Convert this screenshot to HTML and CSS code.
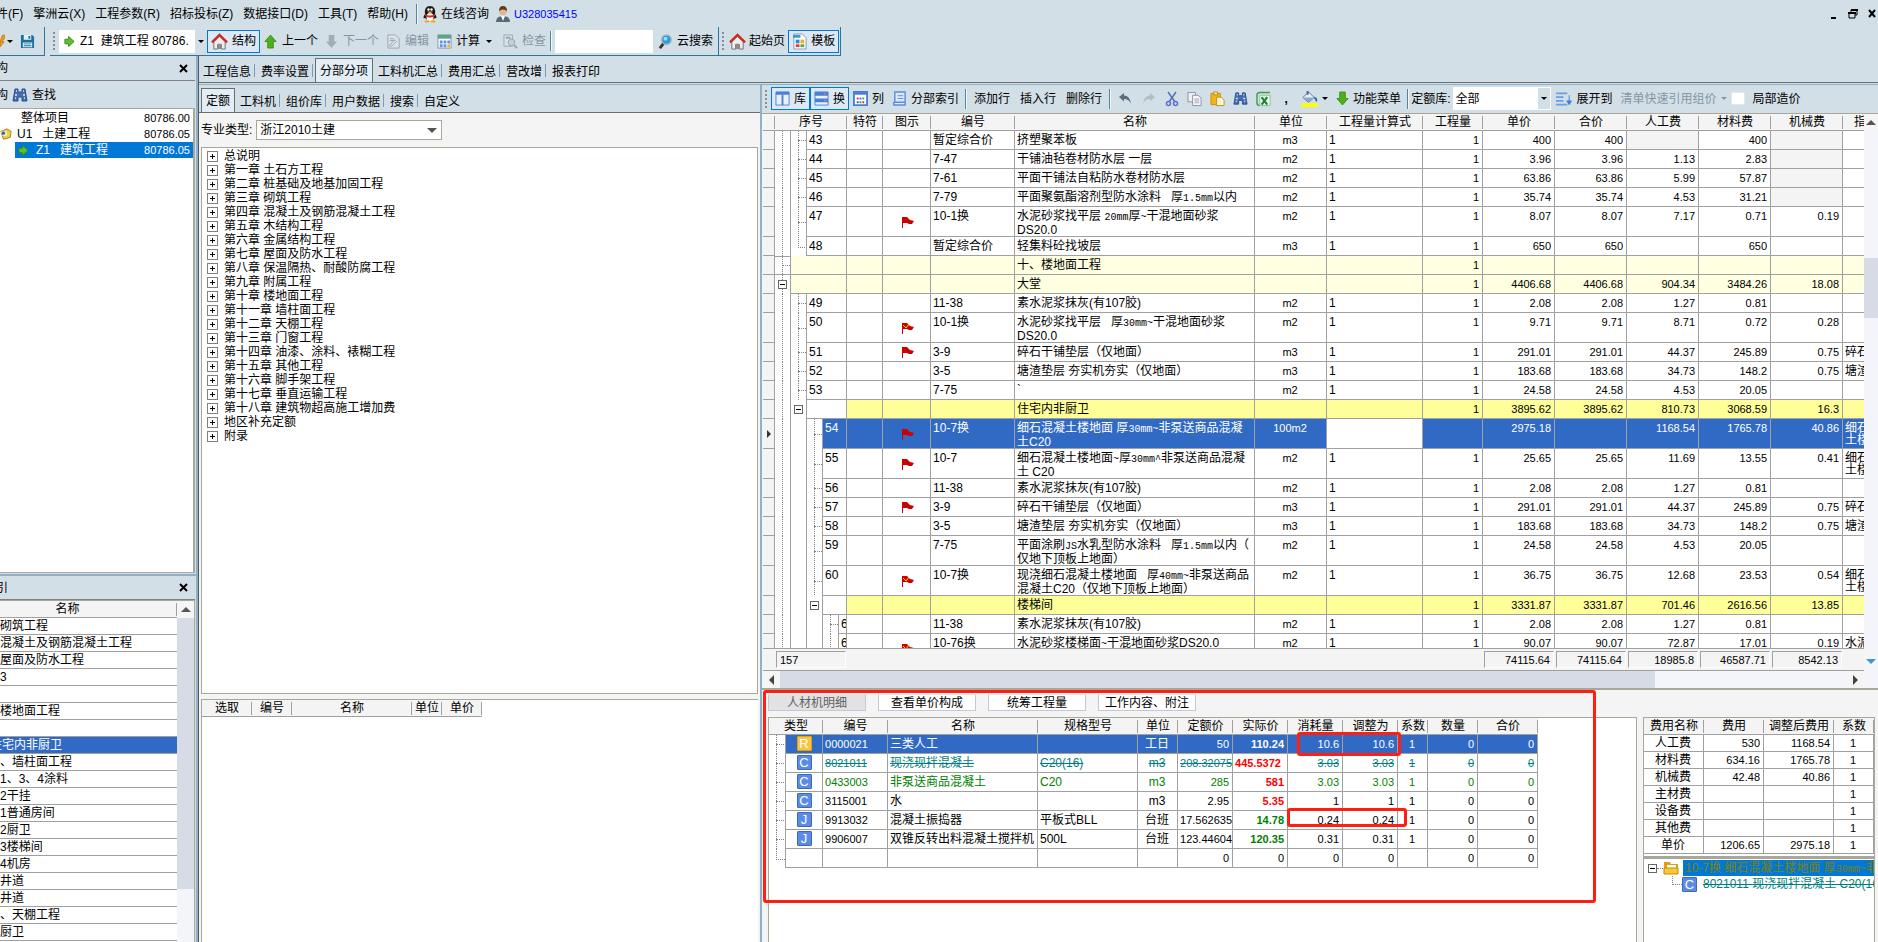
FILE: index.html
```html
<!DOCTYPE html>
<html lang="zh-CN">
<head>
<meta charset="utf-8">
<title>建筑工程计价</title>
<link rel="stylesheet" href="styles.css">
</head>
<body>
<svg class="defs" aria-hidden="true">
  <symbol id="up" viewBox="0 0 14 16"><path d="M7 1l6 7H10v7H4V8H1z" fill="#4fae1f" stroke="#3c9412"/></symbol>
  <symbol id="down" viewBox="0 0 14 16"><path d="M7 15l6-7H10V1H4v7H1z" fill="#4fae1f" stroke="#3c9412"/></symbol>
  <symbol id="downgray" viewBox="0 0 14 16"><path d="M7 15l6-7H10V1H4v7H1z" fill="#a0adb5"/></symbol>
  <symbol id="right" viewBox="0 0 12 12"><path d="M1 3.500h4V0.500l6 5.500-6 5.500v-3H1z" fill="#5fbf2a" stroke="#2f8a12"/></symbol>
  <symbol id="save" viewBox="0 0 16 16"><path d="M1 1h12l2 2v12H1z" fill="#17719b"/><path d="M4 1h8v5H4zM3 9h10v5H3z" fill="#e6f1f6"/><path d="M9 2h2v3H9zM4 10h8v1H4zM4 12h8v1H4z" fill="#17719b"/></symbol>
  <symbol id="bolt" viewBox="0 0 6 16"><path d="M3 1h3v3L2 9h3L0 15V9z" fill="#eda11f" stroke="#b9770c"/></symbol>
  <symbol id="house" viewBox="0 0 18 18"><path d="M3 9v8h4v-5h4v5h4V9L9 3.500z" fill="#eee" stroke="#6d6d6d"/><path d="M7 12h4v5H7z" fill="#8c8c8c"/><path d="M1 10l8-8 8 8" fill="none" stroke="#cf2a20" stroke-width="2.500"/></symbol>
  <symbol id="editgray" viewBox="0 0 16 16"><path d="M2 1h8l4 4v10H2z" fill="#dbe3e8" stroke="#98a5ae"/><path d="M4 5h4M4 7h5M4 12l5-6 2 2-5 5H4z" fill="none" stroke="#98a5ae"/></symbol>
  <symbol id="checkgray" viewBox="0 0 16 16"><path d="M1 1h9v12H1z" fill="#dbe3e8" stroke="#98a5ae"/><circle cx="9" cy="9" r="3.500" fill="#c5d0d6" stroke="#98a5ae"/><path d="M12 12l3 3M3 4h5" stroke="#98a5ae" stroke-width="2"/></symbol>
  <symbol id="calc" viewBox="0 0 16 16"><path d="M1 1h14v14H1z" fill="#fff" stroke="#7f93a3"/><path d="M1 1h14v4H1z" fill="#5aa68c"/><path d="M3 7h3v3H3zM7 7h3v3H7zM3 11h3v3H3zM7 11h3v3H7zM11 7h3v3h-3z" fill="#6693e0"/><path d="M11 11h3v3h-3z" fill="#f2b51d"/></symbol>
  <symbol id="lens" viewBox="0 0 16 16"><path d="M6 10l-4 5" stroke="#333" stroke-width="3"/><circle cx="9" cy="6" r="5" fill="#2b9be6" stroke="#9fb3c0" stroke-width="1.500"/><circle cx="8" cy="5" r="2" fill="#a5dbff"/></symbol>
  <symbol id="tpl" viewBox="0 0 16 18"><path d="M2 1h9l4 4v12H2z" fill="#fff" stroke="#8b98a2"/><path d="M1 2h8v3H1z" fill="#3c9dc0"/><path d="M4 7h4v4H4z" fill="#2f86e0"/><path d="M9 7h4v4H9z" fill="#f0b21c"/><path d="M4 12h4v3H4z" fill="#e23b3b"/><path d="M9 12h4v3H9z" fill="#46b04a"/></symbol>
  <symbol id="qq" viewBox="0 0 16 18"><path d="M3 9Q2 1 8 1t5 8q3 5 0 4-5 5-10 0-3 1 0-4z" fill="#1b1b1b"/><ellipse cx="8" cy="12" rx="3.500" ry="4" fill="#fff"/><path d="M3 9q5 3 10 0v2q-5 3-10 0z" fill="#e22c1e"/><path d="M5 6.500h6L8 8.500z" fill="#f5a61d"/><circle cx="6.500" cy="4.500" r="1.200" fill="#fff"/><circle cx="9.500" cy="4.500" r="1.200" fill="#fff"/><path d="M3 16h4v1H3zM9 16h4v1H9z" fill="#f5a61d" stroke="#f5a61d"/></symbol>
  <symbol id="user" viewBox="0 0 16 18"><path d="M1 17q0-6 7-6t7 6z" fill="#56697a"/><path d="M6 11h4l-2 5z" fill="#fff"/><circle cx="8" cy="6" r="4" fill="#e8b48c"/><path d="M4 6q0-5 4-5t4 5q-4-3-8 0z" fill="#5f3b22"/></symbol>
  <symbol id="bino" viewBox="0 0 16 16"><path d="M3 2h3v3h4V2h3l2 12h-5v-4H6v4H1z" fill="#456fb0" stroke="#2b4f8c"/><path d="M3 8h2M11 8h2M4 4h1M11 4h1M3 11h1M12 11h1" stroke="#dfe9f7" stroke-width="1.500"/></symbol>
  <symbol id="cols" viewBox="0 0 16 16"><path d="M1 1h14v14H1z" fill="#e9f1fc" stroke="#4a7fd6"/><path d="M1 1h14v3H1z" fill="#4a7fd6"/><path d="M8 4v11" stroke="#4a7fd6" stroke-width="2"/></symbol>
  <symbol id="rows" viewBox="0 0 16 16"><path d="M1 1h14v14H1z" fill="#e9f1fc" stroke="#4a7fd6"/><path d="M1 1h14v4H1zM1 8h14v4H1z" fill="#4a7fd6"/><path d="M11 3h2M11 10h2" stroke="#f88"/></symbol>
  <symbol id="cells" viewBox="0 0 16 16"><path d="M1 1h14v14H1z" fill="#fff" stroke="#4a7fd6" stroke-width="2"/><path d="M1 1h14v3H1z" fill="#4a7fd6"/><path d="M4 7h2v2H4zM10 11h2v2h-2z" fill="#d33"/><path d="M7 7h2v2H7z" fill="#b3c"/><path d="M10 7h2v2h-2zM7 11h2v2H7z" fill="#2a6"/><path d="M4 11h2v2H4z" fill="#25c"/></symbol>
  <symbol id="book" viewBox="0 0 16 16"><path d="M3 1h11v11H3zM3 12q-2 0-1 3h12v-3" fill="#dce9fb" stroke="#5c8cdc" stroke-width="1.500"/><path d="M6 5h6M6 8h6" stroke="#5c8cdc"/></symbol>
  <symbol id="undo" viewBox="0 0 14 14"><path d="M1 5l5-4v2.500q6 0 7 8.500-2-5-7-5v2.500z" fill="#5d6f7e"/></symbol>
  <symbol id="redo" viewBox="0 0 14 14"><path d="M13 5L8 1v2.500Q2 3.500 1 12q2-5 7-5v2.500z" fill="#b2bdc5"/></symbol>
  <symbol id="cut" viewBox="0 0 14 16"><path d="M3 1l7 10M11 1L4 11" stroke="#5471b5" stroke-width="1.500"/><circle cx="3.500" cy="12.500" r="2" fill="none" stroke="#5a6fd0" stroke-width="1.500"/><circle cx="10.500" cy="12.500" r="2" fill="none" stroke="#5a6fd0" stroke-width="1.500"/></symbol>
  <symbol id="copy" viewBox="0 0 16 16"><path d="M1 1h8v10H1z" fill="#eef0f4" stroke="#8e8ea6"/><path d="M6 4h6l3 3v8H6z" fill="#f7f7fa" stroke="#8e8ea6"/><path d="M8 8h5M8 10h5M8 12h5" stroke="#a0a0b5"/></symbol>
  <symbol id="paste" viewBox="0 0 16 16"><path d="M1 2h10v12H1z" fill="#f3b41b" stroke="#c58f0d"/><path d="M4 0.500h4v3H4z" fill="#fff0b5" stroke="#b8860b"/><path d="M7 6h5l3 3v6H7z" fill="#fff6d8" stroke="#c58f0d"/></symbol>
  <symbol id="xls" viewBox="0 0 16 16"><path d="M15 1H4Q1 1 1 4v8q0 3 3 3" fill="none" stroke="#3f9a4c" stroke-width="1.500"/><path d="M4 4h11v11H4z" fill="#f3faf1" stroke="#8cbf90"/><path d="M6 6l6 8M12 6l-6 8" stroke="#218a3a" stroke-width="2.500"/></symbol>
  <symbol id="fill" viewBox="0 0 18 18"><path d="M0 14h18v4H0z" fill="#ff0"/><path d="M2 8l6-6 6 6-6 5z" fill="#e9eef6" stroke="#56759c"/><path d="M3 8h10l-5 5z" fill="#8fa9cc"/><path d="M14 8q3 1 2 4M7 5V1" stroke="#3a62a8" stroke-width="2" fill="none"/></symbol>
  <symbol id="expand" viewBox="0 0 18 16"><path d="M1 2h12M1 6h8M1 10h8M1 14h12" stroke="#6a9fe4" stroke-width="2"/><path d="M15 4v8M12.500 10l2.500 4 2.500-4z" fill="#3f7fd8" stroke="#3f7fd8"/></symbol>
  <symbol id="flag" viewBox="0 0 12 12"><path d="M0 1h5l3 3 4 1-2 3H7L5 7H1v5H0z" fill="#c00"/></symbol>
  <symbol id="flagv" viewBox="0 0 12 12"><path d="M0 1h5l3 3 4 1-2 3H7L5 7H1v5H0z" fill="#c00"/><path d="M1 3l3 3 3-4" fill="none" stroke="#fd2"/></symbol>
  <symbol id="unit" viewBox="0 0 14 14"><path d="M1 4l7-3 5 3-1 7-8 2z" fill="#f0cd4c" stroke="#9a7b15"/><path d="M1 4h7v5H3z" fill="#fff3b8"/><circle cx="4" cy="6" r="2" fill="#2e5fc4"/></symbol>
  <symbol id="folder" viewBox="0 0 16 14"><path d="M1 1h6l1 2h7v10H1z" fill="#e0a010"/><path d="M4 4h9v4H4z" fill="#fff"/><path d="M1 7h14v6H1z" fill="#f8c838" stroke="#c98a08"/></symbol>
</svg>

<nav class="menubar">
  <button class="cut">件(F)</button><button>擎洲云(X)</button><button>工程参数(R)</button><button>招标投标(Z)</button><button>数据接口(D)</button><button>工具(T)</button><button>帮助(H)</button>
  <i class="sep"></i>
  <button class="with-icon"><svg width="16" height="18"><use href="#qq"/></svg>在线咨询</button>
  <a class="account" href="#"><svg width="16" height="18"><use href="#user"/></svg>U328035415</a>
  <div class="winbtns"><button aria-label="最小化"><svg width="8" height="10"><path d="M1 8h5v2H1z"/></svg></button><button aria-label="还原"><svg width="10" height="10"><path d="M3 3V1h6v5H7M1 4h6v5H1z" fill="none" stroke="#000"/><path d="M3 0h7v2H3zM0 3h8v2H0z"/></svg></button><button aria-label="关闭"><svg width="8" height="9"><path d="M1 1l6 7M7 1L1 8" stroke="#000" stroke-width="2"/></svg></button></div>
</nav>

<div class="toolbars">
  <div class="bar bar-file"><button class="bolt"><svg width="5" height="16"><use href="#bolt"/></svg><i class="caret"></i></button><button class="tool"><svg width="15" height="15"><use href="#save"/></svg></button></div>
  <div class="bar">
    <i class="grip"></i>
    <button class="combo"><svg width="11" height="11"><use href="#right"/></svg><span>Z1&nbsp; 建筑工程 80786.</span><b><i class="caret"></i></b></button>
    <button class="tool on"><svg width="17" height="17"><use href="#house"/></svg>结构</button>
    <button class="tool wide"><svg width="13" height="15"><use href="#up"/></svg>上一个</button>
    <button class="tool wide off"><svg width="13" height="15"><use href="#downgray"/></svg>下一个</button>
    <button class="tool off"><svg width="15" height="15"><use href="#editgray"/></svg>编辑</button>
    <button class="tool"><svg width="15" height="15"><use href="#calc"/></svg>计算<i class="caret"></i></button>
    <button class="tool off"><svg width="15" height="15"><use href="#checkgray"/></svg>检查</button>
    <i class="sep"></i>
    <input class="search" type="text" aria-label="云搜索">
    <button class="tool"><svg width="15" height="15"><use href="#lens"/></svg>云搜索</button>
  </div>
  <div class="bar"><i class="grip"></i>
    <button class="tool start"><svg width="17" height="17"><use href="#house"/></svg>起始页</button>
    <button class="tool on"><svg width="15" height="17"><use href="#tpl"/></svg>模板</button>
  </div>
</div>

<div class="main">
  <aside class="side">
    <section class="dock dock-top">
      <header><span>构</span><button class="close" aria-label="关闭"><svg width="9" height="9"><path d="M1 1l7 7M8 1L1 8" stroke="#000" stroke-width="2"/></svg></button></header>
      <div class="find"><span>构</span><button class="with-icon"><svg width="16" height="16"><use href="#bino"/></svg>查找</button></div>
      <ul class="project">
        <li class="root"><span>整体项目</span><em>80786.00</em></li>
        <li class="lv1"><svg width="12" height="14"><use href="#unit"/></svg><span>U1&nbsp; &nbsp;土建工程</span><em>80786.05</em></li>
        <li class="lv2"><svg width="11" height="11"><use href="#right"/></svg><span>Z1&nbsp; &nbsp;建筑工程</span><em>80786.05</em></li>
      </ul>
    </section>
    <section class="dock dock-index">
      <header><span>引</span><button class="close" aria-label="关闭"><svg width="9" height="9"><path d="M1 1l7 7M8 1L1 8" stroke="#000" stroke-width="2"/></svg></button></header>
      <div class="index">
        <div class="index-list">
          <table>
            <thead><tr><th>名称</th></tr></thead>
            <tbody>
              <tr><td>砌筑工程</td></tr><tr><td>混凝土及钢筋混凝土工程</td></tr><tr><td>屋面及防水工程</td></tr><tr><td>3</td></tr><tr><td></td></tr><tr><td>楼地面工程</td></tr><tr><td></td></tr>
              <tr class="sel"><td><span class="cut">住宅内非厨卫</span></td></tr>
              <tr><td>、墙柱面工程</td></tr><tr><td>1、3、4涂料</td></tr><tr><td>2干挂</td></tr><tr><td>1普通房间</td></tr><tr><td>2厨卫</td></tr><tr><td>3楼梯间</td></tr><tr><td>4机房</td></tr><tr><td>井道</td></tr><tr><td>井道</td></tr><tr><td>、天棚工程</td></tr><tr><td>厨卫</td></tr><tr><td></td></tr>
            </tbody>
          </table>
        </div>
        <div class="vscroll"><i class="tri up"></i><b></b></div>
      </div>
    </section>
  </aside>

  <div class="work">
    <nav class="tabs tabs-main"><button>工程信息</button><button>费率设置</button><button class="active">分部分项</button><button>工料机汇总</button><button>费用汇总</button><button>营改增</button><button>报表打印</button></nav>
    <div class="split">
      <section class="library">
        <nav class="tabs tabs-lib"><button class="active">定额</button><button>工料机</button><button>组价库</button><button>用户数据</button><button>搜索</button><button>自定义</button></nav>
        <div class="kind"><label for="kind">专业类型:</label><div class="pick"><select id="kind"><option>浙江2010土建</option></select></div></div>
        <ul class="chapters">
          <li>总说明</li><li>第一章 土石方工程</li><li>第二章 桩基础及地基加固工程</li><li>第三章 砌筑工程</li><li>第四章 混凝土及钢筋混凝土工程</li><li>第五章 木结构工程</li><li>第六章 金属结构工程</li><li>第七章 屋面及防水工程</li><li>第八章 保温隔热、耐酸防腐工程</li><li>第九章 附属工程</li><li>第十章 楼地面工程</li><li>第十一章 墙柱面工程</li><li>第十二章 天棚工程</li><li>第十三章 门窗工程</li><li>第十四章 油漆、涂料、裱糊工程</li><li>第十五章 其他工程</li><li>第十六章 脚手架工程</li><li>第十七章 垂直运输工程</li><li>第十八章 建筑物超高施工增加费</li><li>地区补充定额</li><li>附录</li>
        </ul>
        <div class="picked"><table><colgroup><col class="w50"><col class="w40"><col class="w120"><col class="w30"><col class="w40"></colgroup><thead><tr><th>选取</th><th>编号</th><th>名称</th><th>单位</th><th>单价</th></tr></thead></table></div>
      </section>

      <section class="bill">
        <div class="tools">
          <i class="grip"></i>
          <button class="tool on"><svg width="15" height="15"><use href="#cols"/></svg>库</button>
          <button class="tool on"><svg width="15" height="15"><use href="#rows"/></svg>换</button>
          <button class="tool"><svg width="15" height="15"><use href="#cells"/></svg>列</button>
          <button class="tool"><svg width="15" height="15"><use href="#book"/></svg>分部索引</button>
          <i class="sep"></i>
          <button class="tool text">添加行</button><button class="tool text">插入行</button><button class="tool text">删除行</button>
          <i class="sep"></i>
          <button class="tool hist"><svg width="14" height="14"><use href="#undo"/></svg></button>
          <button class="tool hist"><svg width="14" height="14"><use href="#redo"/></svg></button>
          <button class="tool"><svg width="14" height="16"><use href="#cut"/></svg></button>
          <button class="tool"><svg width="15" height="16"><use href="#copy"/></svg></button>
          <button class="tool"><svg width="15" height="16"><use href="#paste"/></svg></button>
          <button class="tool"><svg width="15" height="15"><use href="#bino"/></svg></button>
          <button class="tool"><svg width="15" height="16"><use href="#xls"/></svg></button>
          <button class="tool comma">,</button>
          <button class="tool"><svg width="17" height="17"><use href="#fill"/></svg><i class="caret"></i></button>
          <button class="tool"><svg width="13" height="15"><use href="#down"/></svg>功能菜单</button>
          <i class="sep"></i>
          <label class="lib" for="lib">定额库:</label>
          <div class="libpick"><select id="lib"><option>全部</option></select><b><i class="caret"></i></b></div>
          <button class="tool"><svg width="17" height="16"><use href="#expand"/></svg>展开到</button>
          <button class="tool off">清单快速引用组价<i class="caret"></i></button>
          <input type="checkbox" id="part" class="tick"><label class="part" for="part">局部造价</label>
        </div>

        <div class="grid-wrap">
          <div class="grid-col">
            <div class="grid-clip">
              <table class="grid">
                <colgroup><col class="w12"><col class="w16"><col class="w16"><col class="w16"><col class="w16"><col class="w8"><col class="w36"><col class="w48"><col class="w84"><col class="w240"><col class="w72"><col class="w96"><col class="w60"><col class="w72"><col class="w72"><col class="w72"><col class="w72"><col class="w72"><col class="w36"></colgroup>
                <thead><tr><th></th><th colspan="5">序号</th><th>特符</th><th>图示</th><th>编号</th><th>名称</th><th>单位</th><th>工程量计算式</th><th>工程量</th><th>单价</th><th>合价</th><th>人工费</th><th>材料费</th><th>机械费</th><th class="cutoff">指</th></tr></thead>
                <tbody>
<tr><td class="h"></td><td class="v"></td><td class="v t"></td><td colspan="3">43</td><td></td><td></td><td>暂定综合价</td><td>挤塑聚苯板</td><td>m3</td><td>1</td><td>1</td><td>400</td><td>400</td><td class="g"></td><td>400</td><td class="g"></td><td></td></tr>
<tr><td class="h"></td><td class="v"></td><td class="v t"></td><td colspan="3">44</td><td></td><td></td><td>7-47</td><td>干铺油毡卷材防水层 一层</td><td>m2</td><td>1</td><td>1</td><td>3.96</td><td>3.96</td><td>1.13</td><td>2.83</td><td class="g"></td><td></td></tr>
<tr><td class="h"></td><td class="v"></td><td class="v t"></td><td colspan="3">45</td><td></td><td></td><td>7-61</td><td>平面干铺法自粘防水卷材防水层</td><td>m2</td><td>1</td><td>1</td><td>63.86</td><td>63.86</td><td>5.99</td><td>57.87</td><td class="g"></td><td></td></tr>
<tr><td class="h"></td><td class="v"></td><td class="v t"></td><td colspan="3">46</td><td></td><td></td><td>7-79</td><td>平面聚氨酯溶剂型防水涂料&nbsp; &nbsp;厚<small>1.5mm</small>以内</td><td>m2</td><td>1</td><td>1</td><td>35.74</td><td>35.74</td><td>4.53</td><td>31.21</td><td class="g"></td><td></td></tr>
<tr class="two"><td class="h"></td><td class="v"></td><td class="v t"></td><td colspan="3">47</td><td></td><td><svg width="12" height="12"><use href="#flag"/></svg></td><td>10-1换</td><td>水泥砂浆找平层 <small>20mm</small>厚<small>~</small>干混地面砂浆<br>DS20.0</td><td>m2</td><td>1</td><td>1</td><td>8.07</td><td>8.07</td><td>7.17</td><td>0.71</td><td>0.19</td><td></td></tr>
<tr><td class="h"></td><td class="v"></td><td class="l"></td><td colspan="3">48</td><td></td><td></td><td>暂定综合价</td><td>轻集料砼找坡层</td><td>m3</td><td>1</td><td>1</td><td>650</td><td>650</td><td></td><td>650</td><td></td><td></td></tr>
<tr class="pale"><td class="h"></td><td class="v t line"></td><td colspan="4"></td><td></td><td></td><td></td><td>十、楼地面工程</td><td></td><td></td><td>1</td><td></td><td></td><td></td><td></td><td></td><td></td></tr>
<tr class="pale"><td class="h"></td><td class="v m"><button class="box" aria-label="折叠"></button></td><td colspan="4"></td><td></td><td></td><td></td><td>大堂</td><td></td><td></td><td>1</td><td>4406.68</td><td>4406.68</td><td>904.34</td><td>3484.26</td><td>18.08</td><td></td></tr>
<tr><td class="h"></td><td class="v"></td><td class="v t"></td><td colspan="3">49</td><td></td><td></td><td>11-38</td><td>素水泥浆抹灰(有107胶)</td><td>m2</td><td>1</td><td>1</td><td>2.08</td><td>2.08</td><td>1.27</td><td>0.81</td><td></td><td></td></tr>
<tr class="two"><td class="h"></td><td class="v"></td><td class="v t"></td><td colspan="3">50</td><td></td><td><svg width="12" height="12"><use href="#flagv"/></svg></td><td>10-1换</td><td>水泥砂浆找平层&nbsp; &nbsp;厚<small>30mm~</small>干混地面砂浆<br>DS20.0</td><td>m2</td><td>1</td><td>1</td><td>9.71</td><td>9.71</td><td>8.71</td><td>0.72</td><td>0.28</td><td></td></tr>
<tr><td class="h"></td><td class="v"></td><td class="v t"></td><td colspan="3">51</td><td></td><td><svg width="12" height="12"><use href="#flag"/></svg></td><td>3-9</td><td>碎石干铺垫层（仅地面）</td><td>m3</td><td>1</td><td>1</td><td>291.01</td><td>291.01</td><td>44.37</td><td>245.89</td><td>0.75</td><td>碎石</td></tr>
<tr><td class="h"></td><td class="v"></td><td class="v t"></td><td colspan="3">52</td><td></td><td></td><td>3-5</td><td>塘渣垫层 夯实机夯实（仅地面）</td><td>m3</td><td>1</td><td>1</td><td>183.68</td><td>183.68</td><td>34.73</td><td>148.2</td><td>0.75</td><td>塘渣</td></tr>
<tr><td class="h"></td><td class="v"></td><td class="v t"></td><td colspan="3">53</td><td></td><td></td><td>7-75</td><td>`</td><td>m2</td><td>1</td><td>1</td><td>24.58</td><td>24.58</td><td>4.53</td><td>20.05</td><td></td><td></td></tr>
<tr class="group"><td class="h"></td><td class="v"></td><td class="m"><button class="box" aria-label="折叠"></button></td><td class="blank" colspan="3"></td><td></td><td></td><td></td><td>住宅内非厨卫</td><td></td><td></td><td>1</td><td>3895.62</td><td>3895.62</td><td>810.73</td><td>3068.59</td><td>16.3</td><td></td></tr>
<tr class="two sel"><td class="h cur"></td><td class="v"></td><td class="e"></td><td class="v t"></td><td colspan="2">54</td><td></td><td><svg width="12" height="12"><use href="#flag"/></svg></td><td>10-7换</td><td>细石混凝土楼地面 厚<small>30mm~</small>非泵送商品混凝<br>土C20</td><td>100m2</td><td class="edit"></td><td></td><td>2975.18</td><td></td><td>1168.54</td><td>1765.78</td><td>40.86</td><td>细石<br>土楼</td></tr>
<tr class="two"><td class="h"></td><td class="v"></td><td class="e"></td><td class="v t"></td><td colspan="2">55</td><td></td><td><svg width="12" height="12"><use href="#flag"/></svg></td><td>10-7</td><td>细石混凝土楼地面<small>~</small>厚<small>30mm^</small>非泵送商品混凝<br>土 C20</td><td>m2</td><td>1</td><td>1</td><td>25.65</td><td>25.65</td><td>11.69</td><td>13.55</td><td>0.41</td><td>细石<br>土楼</td></tr>
<tr><td class="h"></td><td class="v"></td><td class="e"></td><td class="v t"></td><td colspan="2">56</td><td></td><td></td><td>11-38</td><td>素水泥浆抹灰(有107胶)</td><td>m2</td><td>1</td><td>1</td><td>2.08</td><td>2.08</td><td>1.27</td><td>0.81</td><td></td><td></td></tr>
<tr><td class="h"></td><td class="v"></td><td class="e"></td><td class="v t"></td><td colspan="2">57</td><td></td><td><svg width="12" height="12"><use href="#flag"/></svg></td><td>3-9</td><td>碎石干铺垫层（仅地面）</td><td>m3</td><td>1</td><td>1</td><td>291.01</td><td>291.01</td><td>44.37</td><td>245.89</td><td>0.75</td><td>碎石</td></tr>
<tr><td class="h"></td><td class="v"></td><td class="e"></td><td class="v t"></td><td colspan="2">58</td><td></td><td></td><td>3-5</td><td>塘渣垫层 夯实机夯实（仅地面）</td><td>m3</td><td>1</td><td>1</td><td>183.68</td><td>183.68</td><td>34.73</td><td>148.2</td><td>0.75</td><td>塘渣</td></tr>
<tr class="two"><td class="h"></td><td class="v"></td><td class="e"></td><td class="v t"></td><td colspan="2">59</td><td></td><td></td><td>7-75</td><td>平面涂刷<small>JS</small>水乳型防水涂料&nbsp; &nbsp;厚<small>1.5mm</small>以内（<br>仅地下顶板上地面）</td><td>m2</td><td>1</td><td>1</td><td>24.58</td><td>24.58</td><td>4.53</td><td>20.05</td><td></td><td></td></tr>
<tr class="two"><td class="h"></td><td class="v"></td><td class="e"></td><td class="v t"></td><td colspan="2">60</td><td></td><td><svg width="12" height="12"><use href="#flagv"/></svg></td><td>10-7换</td><td>现浇细石混凝土楼地面&nbsp; &nbsp;厚<small>40mm~</small>非泵送商品<br>混凝土C20（仅地下顶板上地面）</td><td>m2</td><td>1</td><td>1</td><td>36.75</td><td>36.75</td><td>12.68</td><td>23.53</td><td>0.54</td><td>细石<br>土楼</td></tr>
<tr class="group"><td class="h"></td><td class="v"></td><td class="e"></td><td class="m"><button class="box" aria-label="折叠"></button></td><td class="blank" colspan="2"></td><td></td><td></td><td></td><td>楼梯间</td><td></td><td></td><td>1</td><td>3331.87</td><td>3331.87</td><td>701.46</td><td>2616.56</td><td>13.85</td><td></td></tr>
<tr><td class="h"></td><td class="v"></td><td class="e"></td><td class="e"></td><td class="v t"></td><td class="num">6</td><td></td><td></td><td>11-38</td><td>素水泥浆抹灰(有107胶)</td><td>m2</td><td>1</td><td>1</td><td>2.08</td><td>2.08</td><td>1.27</td><td>0.81</td><td></td><td></td></tr>
<tr class="two"><td class="h"></td><td class="v"></td><td class="e"></td><td class="e"></td><td class="v t"></td><td class="num">6</td><td></td><td><svg width="12" height="12"><use href="#flagv"/></svg></td><td>10-76换</td><td>水泥砂浆楼梯面<small>~</small>干混地面砂浆DS20.0</td><td>m2</td><td>1</td><td>1</td><td>90.07</td><td>90.07</td><td>72.87</td><td>17.01</td><td>0.19</td><td>水泥</td></tr>
                </tbody>
              </table>
            </div>
            <div class="totals"><output class="count">157</output><i></i><output>74115.64</output><output>74115.64</output><output>18985.8</output><output>46587.71</output><output>8542.13</output></div>
            <div class="hscroll"><i class="tri left"></i><div><b></b></div><i class="tri right"></i></div>
          </div>
          <div class="vscroll grid-scroll"><i class="tri up"></i><u></u><b></b><u></u><i class="tri down"></i></div>
        </div>

        <div class="detail">
          <div class="detail-left">
            <div class="switch"><button class="pressed">人材机明细</button><button>查看单价构成</button><button>统筹工程量</button><button>工作内容、附注</button></div>
            <div class="resources">
              <table class="res">
                <colgroup><col class="w17"><col class="w37"><col class="w65"><col class="w150"><col class="w100"><col class="w40"><col class="w55"><col class="w55"><col class="w55"><col class="w55"><col class="w30"><col class="w50"><col class="w60"></colgroup>
                <thead><tr><th colspan="2">类型</th><th>编号</th><th>名称</th><th>规格型号</th><th>单位</th><th>定额价</th><th>实际价</th><th>消耗量</th><th>调整为</th><th>系数</th><th>数量</th><th>合价</th></tr></thead>
                <tbody>
                <tr class="sel"><td class="v t"></td><td><b class="badge r">R</b></td><td>0000021</td><td>三类人工</td><td></td><td>工日</td><td>50</td><td class="price">110.24</td><td>10.6</td><td>10.6</td><td>1</td><td>0</td><td>0</td></tr>
                <tr class="gone"><td class="v t"></td><td><b class="badge">C</b></td><td>8021011</td><td>现浇现拌混凝土</td><td>C20(16)</td><td>m3</td><td class="long">208.32075</td><td class="price long">445.5372</td><td>3.03</td><td>3.03</td><td>1</td><td>0</td><td>0</td></tr>
                <tr class="added"><td class="v t"></td><td><b class="badge">C</b></td><td>0433003</td><td>非泵送商品混凝土</td><td>C20</td><td>m3</td><td>285</td><td class="price high">581</td><td>3.03</td><td>3.03</td><td>1</td><td>0</td><td>0</td></tr>
                <tr><td class="v t"></td><td><b class="badge">C</b></td><td>3115001</td><td>水</td><td></td><td>m3</td><td>2.95</td><td class="price high">5.35</td><td>1</td><td>1</td><td>1</td><td>0</td><td>0</td></tr>
                <tr><td class="v t"></td><td><b class="badge">J</b></td><td>9913032</td><td>混凝土振捣器</td><td>平板式BLL</td><td>台班</td><td class="long">17.562635</td><td class="price low">14.78</td><td>0.24</td><td>0.24</td><td>1</td><td>0</td><td>0</td></tr>
                <tr><td class="v t"></td><td><b class="badge">J</b></td><td>9906007</td><td>双锥反转出料混凝土搅拌机</td><td>500L</td><td>台班</td><td class="long">123.44604</td><td class="price low">120.35</td><td>0.31</td><td>0.31</td><td>1</td><td>0</td><td>0</td></tr>
                <tr><td class="l"></td><td></td><td></td><td></td><td></td><td></td><td>0</td><td>0</td><td>0</td><td>0</td><td></td><td>0</td><td>0</td></tr>
                </tbody>
              </table>
            </div>
          </div>
          <div class="detail-right">
            <div class="fees">
              <table class="fee">
                <colgroup><col class="w60"><col class="w60"><col class="w70"><col class="w40"></colgroup>
                <thead><tr><th>费用名称</th><th>费用</th><th>调整后费用</th><th>系数</th></tr></thead>
                <tbody><tr><td>人工费</td><td>530</td><td>1168.54</td><td>1</td></tr><tr><td>材料费</td><td>634.16</td><td>1765.78</td><td>1</td></tr><tr><td>机械费</td><td>42.48</td><td>40.86</td><td>1</td></tr><tr><td>主材费</td><td></td><td></td><td>1</td></tr><tr><td>设备费</td><td></td><td></td><td>1</td></tr><tr><td>其他费</td><td></td><td></td><td>1</td></tr><tr><td>单价</td><td>1206.65</td><td>2975.18</td><td>1</td></tr></tbody>
              </table>
            </div>
            <ul class="swap">
              <li><button class="box" aria-label="折叠"></button><i class="dots"></i><svg width="16" height="14"><use href="#folder"/></svg><span class="hot">10-7换 细石混凝土楼地面 厚<small>30mm~</small>非</span></li>
              <li class="child"><i class="elbow"></i><b class="badge">C</b><span class="dead">8021011 现浇现拌混凝土 C20(16)</span></li>
            </ul>
          </div>
          <i class="mark mark-panel"></i><i class="mark mark-a"></i><i class="mark mark-b"></i>
        </div>
      </section>
    </div>
  </div>
</div>
</body>
</html>
```
FILE: styles.css
```css
* { box-sizing: border-box; }
html, body { height: 100%; }
body {
  margin: 0; display: flex; flex-direction: column; overflow: hidden;
  background: #d3dfe7; color: #000;
  font: 12px/14px "Liberation Sans", "Noto Sans CJK SC", sans-serif;
}
button, input, select { font: inherit; color: inherit; }
button { border: 0; padding: 0; margin: 0; background: none; white-space: nowrap; }
ul { list-style: none; margin: 0; padding: 0; }
i, em { font-style: normal; }
small { font: 10px/12px "Liberation Mono", monospace; }
svg { display: block; flex: none; }
.defs { position: absolute; width: 0; height: 0; }

/* menu */
.menubar { display: flex; align-items: center; height: 27px; gap: 10px; flex: none; }
.menubar .cut { margin-left: -4px; }
.sep { width: 2px; height: 20px; border-left: 1px solid #4e87a6; border-right: 1px solid #f2f7fa; flex: none; }
.menubar .with-icon, .account { display: flex; align-items: center; gap: 3px; }
.menubar .sep { margin: 0 -6px 0 -2px; }
.menubar .with-icon { margin-right: -4px; }
.account { color: #00f; text-decoration: none; font-size: 11px; }
.winbtns { margin-left: auto; display: flex; align-items: center; gap: 10px; padding-right: 2px; }

/* tool bars */
.toolbars { display: flex; height: 29px; flex: none; gap: 5px; }
.bar { display: flex; align-items: center; height: 29px; border-bottom: 1px solid #2f7598; border-right: 1px solid #2f7598; padding: 0 1px 0 2px; }
.toolbars .bar + .bar + .bar { margin-left: -5px; }
.bar-file { padding: 0 5px 0 0; }
.bolt { display: flex; align-items: center; }
.tool { display: flex; align-items: center; justify-content: center; height: 23px; gap: 4px; padding: 0 4px; flex: none; }
.tool.wide { gap: 5px; padding-right: 3px; }
.tool.start { padding: 0 3px 0 1px; gap: 3px; }
.tool.off { color: #8496a2; }
.tool.on { border: 1px solid #0078d7; background: #dce9f5; padding: 0 3px; }
.caret { display: block; width: 0; height: 0; border: 3px solid transparent; border-top-color: currentColor; border-bottom: 0; margin: 0 3px 0 2px; flex: none; }
.grip { width: 2px; height: 18px; margin: 0 4px 0 1px; background: repeating-linear-gradient(#8a8f93 0 2px, transparent 2px 4px); flex: none; }
.combo { display: flex; align-items: center; width: 148px; height: 23px; background: #fff; padding-left: 5px; gap: 5px; text-align: left; }
.combo span { flex: 1; overflow: hidden; }
.combo b, .libpick b { display: flex; align-items: center; justify-content: center; width: 12px; height: 100%; background: #d3dfe7; }
.combo .caret, .libpick .caret { margin: 0; }
.search { width: 98px; height: 23px; border: 0; background: #fff; margin: 0 1px 0 3px; padding: 0 4px; }

/* frame */
.main { display: flex; flex: 1; min-height: 0; }
.side { display: flex; flex-direction: column; width: 199px; flex: none; border-right: 1px solid #55595c; min-height: 0; }
.dock { display: flex; flex-direction: column; min-height: 0; border-right: 2px solid #8fb0c6; padding-right: 1px; }
.dock-top { flex: 1; }
.dock-index { flex: 0 0 368px; border-top: 2px solid #8fb0c6; }
.dock header { display: flex; align-items: center; justify-content: space-between; height: 25px; padding-right: 7px; border-bottom: 1px solid #808080; flex: none; }
.dock-index header { height: 24px; }
.dock header span, .find span { margin-left: -4px; }
.find { display: flex; align-items: center; height: 27px; gap: 4px; flex: none; }
.find .with-icon { display: flex; align-items: center; gap: 4px; }
.project { flex: 1; background: #fff; border: 1px solid #a9a797; border-left: 0; border-right-width: 2px; padding-top: 1px; margin-bottom: 1px; }
.project li { display: flex; align-items: center; height: 16px; gap: 5px; padding-right: 3px; white-space: nowrap; }
.project em { margin-left: auto; font-size: 11px; }
.project .root { padding-left: 21px; }
.project .lv2 { margin-left: 15px; padding-left: 3px; gap: 7px; background: #0078d7; color: #fff; }
.index { display: flex; flex: 1; min-height: 0; background: #fff; border-top: 1px solid #a9a797; border-right: 1px solid #a9a797; }
.index-list { flex: 1; overflow: hidden; }
.index table { width: 100%; }
.index th { padding-right: 42px; }
.index td { height: 17px; padding: 0; border-right: 0; vertical-align: middle; }
.index .cut { margin-left: -10px; }
.index .sel td { background: #39f; }
.vscroll { display: flex; flex-direction: column; width: 17px; flex: none; background: #f3f5fa; align-items: center; }
.vscroll b { width: 100%; height: 271px; background: #d6dbe5; }
.tri { width: 17px; height: 17px; display: flex; align-items: center; justify-content: center; flex: none; background: #f5f5f5; }
.tri::before { content: ""; border: 5px solid transparent; }
.tri.up::before { border-top: 0; border-bottom-color: #555; }
.tri.down::before { border-bottom: 0; border-top-color: #3a96dd; }
.tri.left::before { border-left: 0; border-right-color: #444; }
.tri.right::before { border-right: 0; border-left-color: #444; }

/* tabs */
.work { display: flex; flex-direction: column; flex: 1; min-width: 0; }
.tabs { display: flex; align-items: flex-end; border-bottom: 1px solid #6b6e70; flex: none; }
.tabs button { height: 23px; padding: 3px 4px 0 6px; border-right: 1px solid transparent; background: linear-gradient(#7e9cae, #7e9cae) right 5px / 1px 13px no-repeat; }
.tabs button + button { padding-left: 5px; }
.tabs button:last-child { background: none; }
.tabs .active { height: 24px; padding: 0 4px; border: 1px solid #6b6e70; border-bottom: 0; background: #e2edf6; }
.tabs button:has(+ .active) { margin-right: 1px; }
.tabs-main { height: 27px; }
.tabs-main button { padding-left: 4px; }
.tabs-lib { height: 28px; padding-left: 2px; background: #d3dfe7; }
.split { display: flex; flex: 1; min-height: 0; padding-top: 1px; }
.library { display: flex; flex-direction: column; flex: 0 0 563px; border-top: 1px solid #8fb0c6; border-right: 2px solid #8fb0c6; background: #f4f4f4; min-width: 0; }
.kind { display: flex; align-items: center; height: 34px; padding: 0 2px; gap: 4px; flex: none; }
.pick { position: relative; width: 186px; height: 20px; }
.pick select { appearance: none; width: 100%; height: 100%; border: 1px solid #a9a797; background: #fff; padding: 0 3px; }
.pick::after { content: ""; position: absolute; right: 5px; top: 8px; border: 5px solid transparent; border-top-color: #555; border-bottom: 0; }
.chapters { flex: 1; background: #fff; border: 1px solid #a9a797; margin: 0 2px 5px 2px; padding: 1px 0 0 5px; }
.chapters li { display: flex; align-items: center; height: 14px; white-space: pre; }
.chapters li::before { content: ""; width: 9px; height: 9px; margin-right: 6px; border: 1px solid #808080; background: linear-gradient(#000, #000) center / 5px 1px no-repeat, linear-gradient(#000, #000) center / 1px 5px no-repeat, #fff; }
.picked { flex: 0 0 243px; background: #fff; border-left: 1px solid #a9a797; border-top: 1px solid #a9a797; margin: 0 2px 0 2px; }

/* grids */
table { border-collapse: separate; border-spacing: 0; table-layout: fixed; width: 0; }
th { height: 17px; padding: 0; font-weight: normal; text-align: center; background: linear-gradient(#a0a0a0, #a0a0a0) right 2px / 1px 13px no-repeat, #f4f4f4; border-bottom: 1px solid #a0a0a0; white-space: nowrap; }
td { height: 19px; padding: 3px 3px 0 2px; border-right: 1px solid #a0a0a0; border-bottom: 1px solid #a0a0a0; line-height: 12px; vertical-align: top; white-space: nowrap; overflow: hidden; background-color: #fff; }
td svg { margin: auto; }
.two td { height: 30px; }
.w8 { width: 8px; } .w12 { width: 12px; } .w16 { width: 16px; } .w17 { width: 17px; } .w30 { width: 30px; } .w36 { width: 36px; } .w37 { width: 37px; }
.w40 { width: 40px; } .w48 { width: 48px; } .w50 { width: 50px; } .w55 { width: 55px; } .w60 { width: 60px; } .w65 { width: 65px; } .w70 { width: 70px; }
.w72 { width: 72px; } .w84 { width: 84px; } .w96 { width: 96px; } .w100 { width: 100px; } .w120 { width: 120px; } .w150 { width: 150px; } .w240 { width: 240px; }
td.v, td.t, td.l, td.m, td.e { padding: 0; border-bottom: 0; vertical-align: middle; }
td.v { background: linear-gradient(#808080 1px, transparent 1px) 7px 0 / 1px 2px repeat-y, #fff; }
td.t::after { content: ""; display: block; width: 8px; margin-left: 7px; border-top: 1px dotted #808080; }
td.l { vertical-align: top; }
td.l::after { content: ""; display: block; width: 8px; height: 10px; margin-left: 7px; border-left: 1px dotted #808080; border-bottom: 1px dotted #808080; }
td.line { border-top: 1px solid #a0a0a0; border-bottom: 1px solid #a0a0a0; }
.box { display: block; width: 9px; height: 9px; margin: 0 auto; flex: none; border: 1px solid #666; background: linear-gradient(#000, #000) center / 5px 1px no-repeat, #fff; }
.grid td:nth-last-child(-n+7) { text-align: right; font-size: 11px; }
.grid td:last-child { text-align: left; font-size: 12px; }
.grid td:nth-last-child(9) { text-align: center; font-size: 11px; }
.grid td:nth-last-child(10) { padding-right: 0; }
.grid td:nth-last-child(12) { vertical-align: middle; padding: 0 3px 0 5px; }
.grid td.h { background: #f4f4f4; }
.grid td.cur::after { content: ""; display: block; margin: 8px 0 0 2px; width: 0; border: 4px solid transparent; border-left-color: #333; border-right: 0; }
.grid td.g { background: #f4f4f4; }
.grid .cutoff { text-align: left; padding-left: 11px; }
.pale td:not(.h):not(.v) { background: #ffffe1; }
.group td:not(.h):not(.v):not(.m):not(.e):not(.blank) { background: #ffff99; }
.sel td:not(.h):not(.v):not(.e):not(.edit) { background: #316ac5; color: #fff; }
td.num { padding-left: 2px; }

.bill { display: flex; flex-direction: column; flex: 1; min-width: 0; border-top: 1px solid #8fb0c6; }
.tools { display: flex; align-items: center; height: 28px; flex: none; padding: 0 0 1px 2px; white-space: nowrap; }
.tools .sep { margin: 0 2px; }
.tools .text { padding: 0 5px; }
.tools .hist { padding: 0 5px; }
.comma { width: 22px; font-weight: bold; }
.tools .caret { margin: 0; }
.libpick { display: flex; width: 98px; height: 23px; background: #fff; border: 1px solid #fff; margin-left: 3px; flex: none; }
.libpick select { appearance: none; flex: 1; min-width: 0; border: 0; background: none; padding: 0 1px; }
.tick { appearance: none; width: 14px; height: 13px; background: #fff; border: 1px solid #e2e8ec; margin: 0 8px 0 0; flex: none; }
.grid-wrap { display: flex; flex: 1; min-height: 0; border-top: 1px solid #a9a797; border-bottom: 2px solid #a9a797; background: #f4f4f4; }
.grid-col { display: flex; flex-direction: column; flex: 1; min-width: 0; padding-left: 1px; }
.grid-clip { flex: 1; min-height: 0; overflow: hidden; border-bottom: 1px solid #a0a0a0; }
.totals { display: flex; height: 21px; padding: 2px 0 2px 13px; flex: none; font-size: 11px; }
.totals output { width: 70px; margin-right: 2px; padding: 1px 3px 0; text-align: right; border: 1px solid #fff; border-top-color: #a0a0a0; border-left-color: #a0a0a0; }
.totals .count { text-align: left; }
.totals i { width: 636px; }
.hscroll { display: flex; height: 18px; flex: none; border-top: 1px solid #a0a0a0; }
.hscroll div { flex: 1; background: #f3f5fa; }
.hscroll b { display: block; width: 82%; height: 100%; background: #d6dbe5; }
.grid-scroll { width: 14px; }
.grid-scroll u { flex: 128; }
.grid-scroll u + b + u { flex: 336; }
.grid-scroll b { height: 60px; }
.grid-scroll .tri { width: 14px; }
.grid-scroll .down { margin-bottom: 18px; }

/* detail */
.detail { position: relative; display: flex; flex: 0 0 252px; gap: 6px; padding: 0 3px 0 6px; background: #f4f4f4; min-width: 0; }
.detail-left { display: flex; flex-direction: column; flex: 1; min-width: 0; }
.switch { display: flex; gap: 12px; padding: 4px 0 6px; height: 27px; flex: none; }
.switch button { width: 98px; height: 17px; background: #fff; border: 1px solid #c3c8d2; border-top-color: #e4e6ea; }
.switch .pressed { background: #e2e2e2; color: #606060; }
.resources { flex: 1; min-height: 0; background: #fff; border: 1px solid #a9a797; border-bottom: 0; overflow: hidden; }
.res td:nth-child(2) { padding: 1px 0 0; }
.res td:nth-child(3) { font-size: 11px; }
.res td:nth-child(6), .res td:nth-child(11) { text-align: center; }
.res td:nth-child(n+7) { text-align: right; font-size: 11px; }
.res td:nth-child(11) { text-align: center; }
.res .sel td:nth-child(2) { background: #fff; }
.res .price { font-weight: bold; font-size: 12px; }
.res td.long { text-align: left; padding-right: 0; text-overflow: clip; }
.res .gone td:not(.price), .dead { color: #008080; text-decoration: line-through; }
.res .gone td:nth-child(2) { text-decoration: none; }
.res .added td { color: #008000; }
.res .gone .price, .res td.high { color: #f00; }
.res td.low { color: #008000; }
.badge { display: block; width: 15px; height: 15px; margin: 0 auto; flex: none; border: 1px solid #3c68bd; border-radius: 1px; background: #5c8be6; color: #fff; text-align: center; font-size: 13px; line-height: 13px; font-weight: normal; }
.badge.r { background: #f9c440; border-color: #e0a010; }
.detail-right { display: flex; flex-direction: column; flex: 0 0 232px; padding-top: 27px; min-width: 0; }
.fees { background: #fff; border: 1px solid #a9a797; height: 140px; flex: none; overflow: hidden; }
.fee td { height: 17px; padding-top: 2px; text-align: right; font-size: 11px; }
.fee td:first-child { text-align: center; font-size: 12px; }
.fee td:last-child { text-align: center; }
.swap { flex: 1; min-height: 0; background: #fff; border: 1px solid #a9a797; border-top-width: 2px; border-bottom: 0; padding: 1px 0 0 4px; overflow: hidden; }
.swap li { display: flex; align-items: center; height: 16px; white-space: nowrap; }
.swap .box { margin: 0; }
.dots { width: 6px; border-top: 1px dotted #808080; }
.hot { flex: 1; min-width: 0; overflow: hidden; margin-left: 4px; padding-left: 2px; line-height: 16px; background: #0078d7; color: #808000; }
.swap .child { padding-left: 24px; }
.elbow { width: 10px; height: 9px; border-left: 1px dotted #808080; border-bottom: 1px dotted #808080; align-self: flex-start; flex: none; }
.swap .badge { margin: 0 6px 0 0; }

/* review marks drawn over the panel */
.mark { position: absolute; border: 3px solid #ff1e10; border-radius: 3px; pointer-events: none; }
.mark-panel { left: 1px; top: 0; width: 833px; height: 213px; }
.mark-a { left: 535px; top: 42px; width: 104px; height: 24px; }
.mark-b { left: 525px; top: 118px; width: 120px; height: 19px; }
```
